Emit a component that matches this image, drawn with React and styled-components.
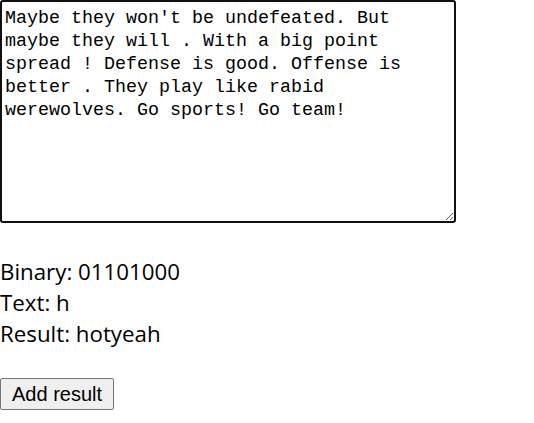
import React, { useState } from 'react';
import styled, { createGlobalStyle } from 'styled-components';

const GlobalStyle = createGlobalStyle`
	body {
		margin: 0;
		background: #fff;
		color: #000;
		font-family: 'Open Sans', 'Noto Sans', sans-serif;
	}
`;

const Page = styled.div`
	display: flex;
	flex-direction: column;
	align-items: flex-start;
`;

const Editor = styled.textarea`
	box-sizing: border-box;
	width: 456px;
	height: 223px;
	margin: 0;
	padding: 5px 3px 2px;
	border: 2px solid #101010;
	border-radius: 3px;
	font-family: 'Liberation Mono', 'DejaVu Sans Mono', monospace;
	font-size: 18.33px;
	line-height: 23px;
	color: #000;
	outline: none;
	resize: both;
`;

const Readout = styled.div`
	margin-top: 33px;
	font-size: 22.3px;
	line-height: 31px;
`;

const Line = styled.div`
	white-space: nowrap;
`;

const Button = styled.button`
	margin-top: 29px;
	height: 32px;
	padding: 0 11px;
	font-family: 'Liberation Sans', Arial, sans-serif;
	font-size: 20px;
	color: #000;
	background: #efefef;
	border: 1px solid #767676;
	border-radius: 2px;
	cursor: pointer;
`;

const initialText =
	"Maybe they won't be undefeated. But maybe they will . With a big point spread ! Defense is good. Offense is better . They play like rabid werewolves. Go sports! Go team!";

export default function App() {
	const [ text, setText ] = useState( initialText );
	const [ result, setResult ] = useState( 'hotyeah' );

	return (
		<Page>
			<GlobalStyle />
			<Editor
				value={ text }
				spellCheck={ false }
				onChange={ ( e ) => setText( e.target.value ) }
			/>
			<Readout>
				<Line>Binary: 01101000</Line>
				<Line>Text: h</Line>
				<Line>Result: { result }</Line>
			</Readout>
			<Button onClick={ () => setResult( result + 'h' ) }>Add result</Button>
		</Page>
	);
}
